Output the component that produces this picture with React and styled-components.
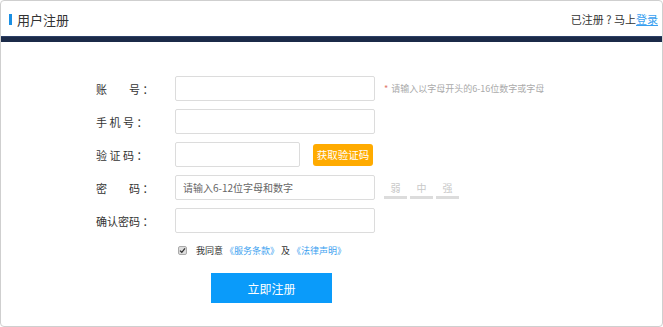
import React from "react";
import styled, { createGlobalStyle } from "styled-components";

const GlobalStyle = createGlobalStyle`
  html, body {
    margin: 0;
    padding: 0;
    background: #fff;
  }
  body {
    font-family: "Noto Sans CJK SC", "Noto Sans", sans-serif;
    color: #333;
  }
`;

const Card = styled.div`
  box-sizing: border-box;
  width: 663px;
  height: 327px;
  border: 1px solid #cfcfcf;
  border-radius: 4px;
  overflow: hidden;
  background: #fff;
`;

const Header = styled.div`
  height: 36px;
  display: flex;
  align-items: center;
  justify-content: space-between;
  padding: 0 4px 0 8px;
  border-bottom: 5px solid #1b2a48;
  box-shadow: inset 0 -3px 0 -2px #2c3f66;
`;

const Title = styled.div`
  display: flex;
  align-items: center;
  gap: 5px;
  font-size: 13px;
  color: #333;
  &::before {
    content: "";
    width: 3px;
    height: 11px;
    background: #1a8fe3;
  }
`;

const LoginHint = styled.div`
  font-size: 11px;
  color: #333;
  a {
    color: #3a9ff0;
    text-decoration: underline;
  }
`;

const Form = styled.div`
  display: flex;
  flex-direction: column;
  gap: 8px;
  padding: 34px 0 0 95px;
`;

const Row = styled.div`
  display: flex;
  align-items: center;
  height: 25px;
`;

const Label = styled.div`
  width: 79px;
  font-size: 11px;
  color: #333;
  white-space: pre;
`;

const Input = styled.input`
  box-sizing: border-box;
  width: ${(p) => p.$w || 200}px;
  height: 25px;
  border: 1px solid #dcdcdc;
  border-radius: 2px;
  padding: 0 7px;
  font-family: inherit;
  font-size: 10px;
  outline: none;
  &::placeholder {
    color: #666;
  }
`;

const Tip = styled.span`
  margin-left: 9px;
  font-size: 9px;
  color: #aaa;
  b {
    color: #e07a6a;
    font-weight: normal;
    margin-right: 3px;
  }
`;

const CodeButton = styled.button`
  margin-left: 13px;
  width: 60px;
  height: 22px;
  border: none;
  border-radius: 3px;
  background: #ffab00;
  color: #fff;
  font-family: inherit;
  font-size: 10.5px;
  padding: 0;
`;

const Strength = styled.div`
  display: flex;
  gap: 3px;
  margin-left: 9px;
  align-self: flex-start;
  margin-top: 5px;
`;

const Level = styled.div`
  width: 23px;
  height: 16px;
  line-height: 16px;
  text-align: center;
  font-size: 10px;
  color: #c8c8c8;
  border-bottom: 3px solid #dcdcdc;
`;

const AgreeRow = styled.div`
  display: flex;
  align-items: center;
  gap: 9px;
  margin: 2px 0 0 82px;
  height: 14px;
  font-size: 9px;
  color: #333;
  a {
    color: #3a9ff0;
    text-decoration: none;
  }
`;

const Check = styled.span`
  box-sizing: border-box;
  width: 9px;
  height: 9px;
  border: 1px solid #aaa;
  border-radius: 2px;
  background: #ddd;
  display: flex;
  align-items: center;
  justify-content: center;
`;

const Submit = styled.button`
  margin: 8px 0 0 115px;
  width: 121px;
  height: 30px;
  border: none;
  background: #0a9bfa;
  color: #fff;
  font-family: inherit;
  font-size: 12px;
  padding: 0;
`;

export default function App() {
  return (
    <>
      <GlobalStyle />
      <Card>
        <Header>
          <Title>用户注册</Title>
          <LoginHint>
            {"已注册 ? 马上"}<a href="#">登录</a>
          </LoginHint>
        </Header>
        <Form>
          <Row>
            <Label>{"账　　号 ："}</Label>
            <Input />
            <Tip>
              <b>*</b>请输入以字母开头的6-16位数字或字母
            </Tip>
          </Row>
          <Row>
            <Label>{"手 机 号 ："}</Label>
            <Input />
          </Row>
          <Row>
            <Label>{"验 证 码 ："}</Label>
            <Input $w={125} />
            <CodeButton>获取验证码</CodeButton>
          </Row>
          <Row>
            <Label>{"密　　码 ："}</Label>
            <Input placeholder="请输入6-12位字母和数字" />
            <Strength>
              <Level>弱</Level>
              <Level>中</Level>
              <Level>强</Level>
            </Strength>
          </Row>
          <Row>
            <Label>{"确认密码 ："}</Label>
            <Input />
          </Row>
          <AgreeRow>
            <Check>
              <svg width="7" height="7" viewBox="0 0 7 7">
                <path d="M1 3.6 L2.8 5.3 L6 1.4" fill="none" stroke="#333" strokeWidth="1.3" />
              </svg>
            </Check>
            <span>
              我同意 <a href="#">《服务条款》</a> 及 <a href="#">《法律声明》</a>
            </span>
          </AgreeRow>
          <Submit>立即注册</Submit>
        </Form>
      </Card>
    </>
  );
}
